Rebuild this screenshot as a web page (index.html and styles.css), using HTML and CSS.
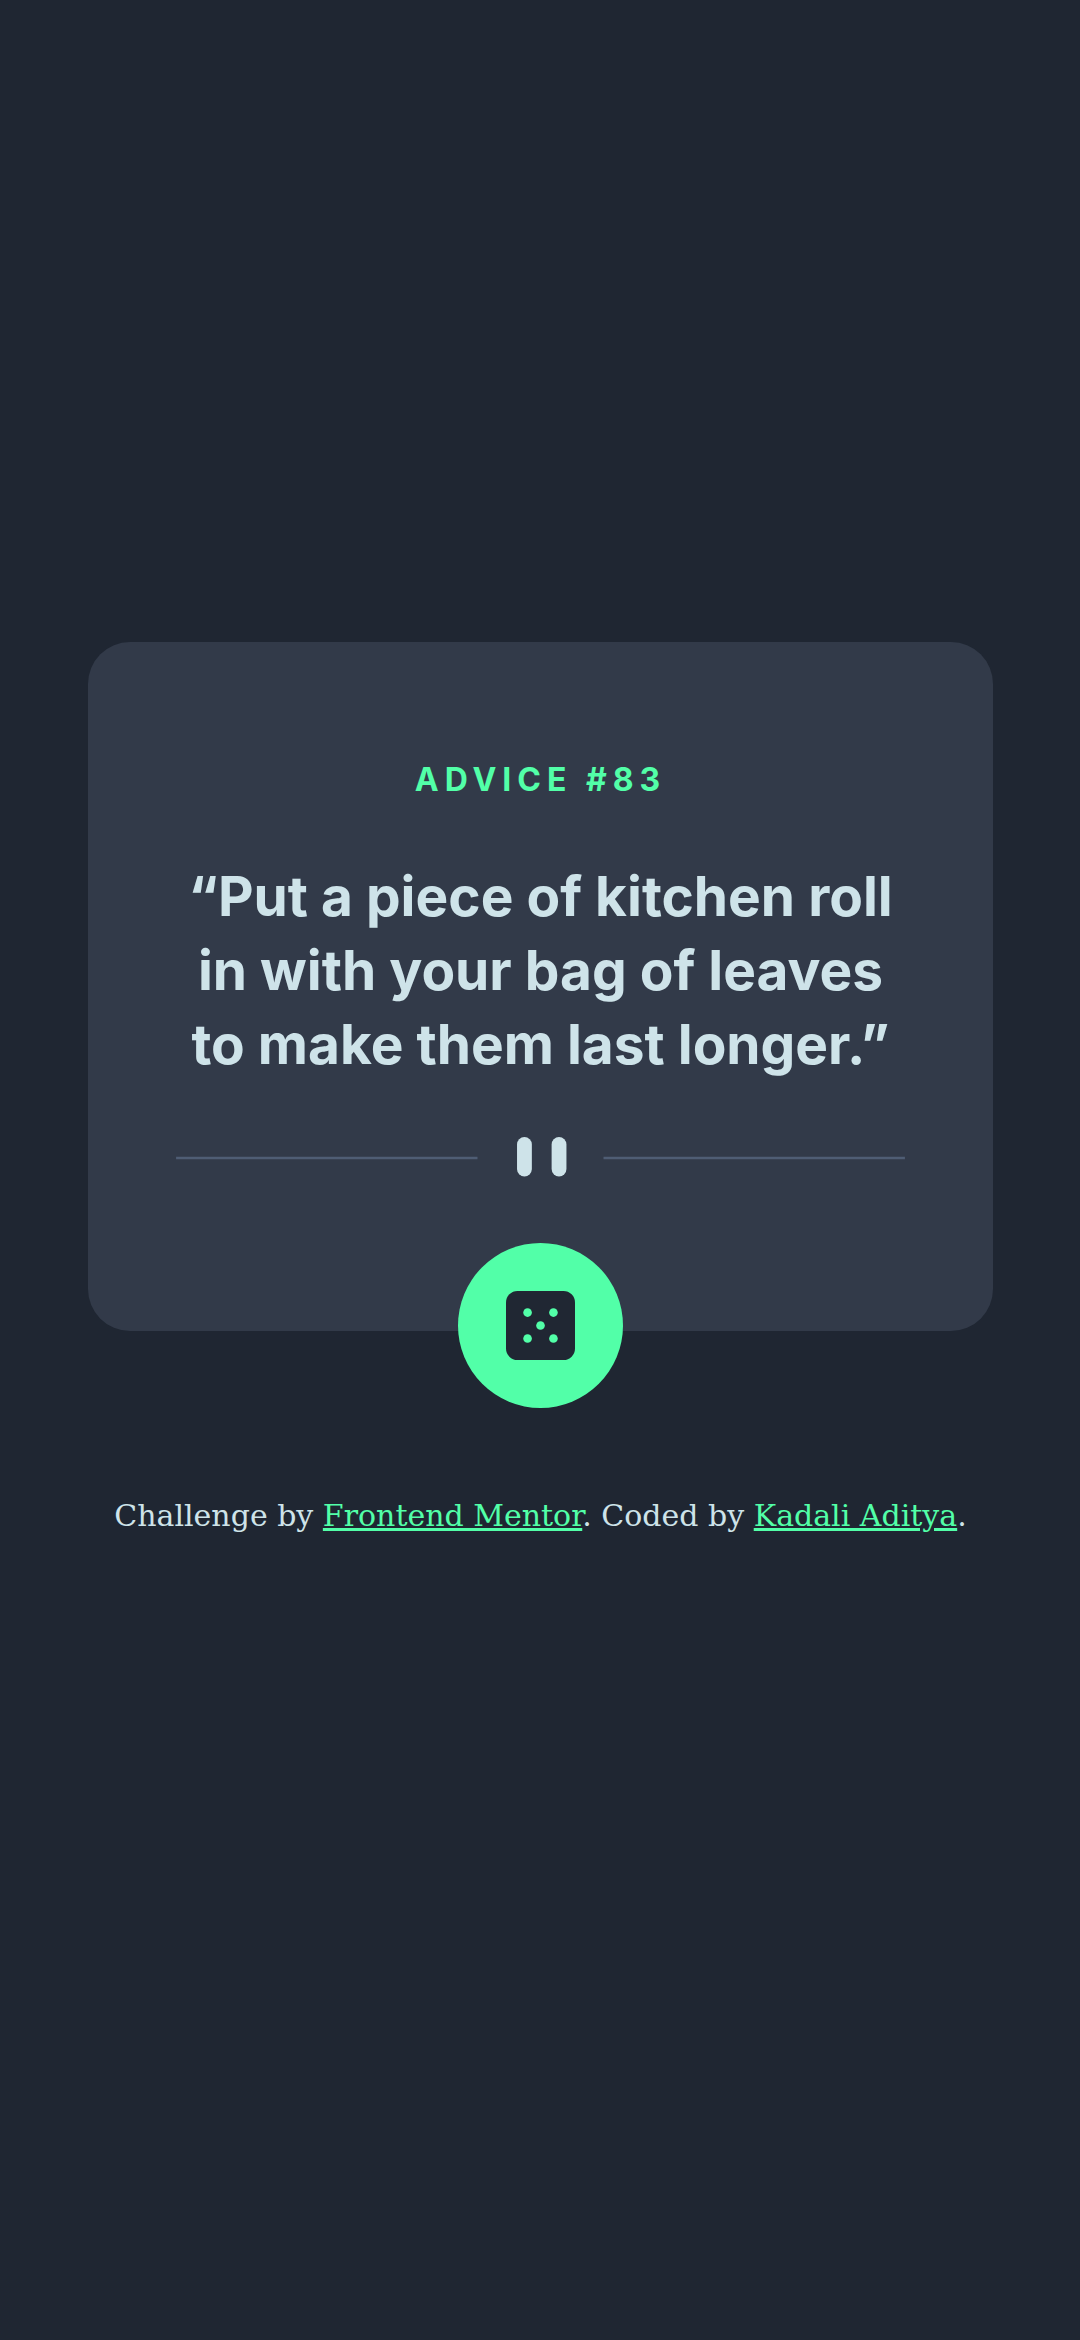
FILE: index.html
```html
<!DOCTYPE html>
<html lang="en">
<head>
  <meta charset="utf-8">
  <meta name="viewport" content="width=device-width, initial-scale=1">
  <title>Advice generator</title>
  <link rel="stylesheet" href="styles.css">
</head>
<body class="page">
  <main class="card">
    <h1 class="card-title">ADVICE #83</h1>
    <p class="quote">“Put a piece of kitchen roll in with your bag of leaves to make them last longer.”</p>
    <svg class="divider" viewBox="0 0 295 16" aria-hidden="true">
      <path fill="#4f5d74" d="M0 8h122v1H0zM173 8h122v1H173z"/>
      <g fill="#cee3e9">
        <rect x="138" width="6" height="16" rx="3"/>
        <rect x="152" width="6" height="16" rx="3"/>
      </g>
    </svg>
    <button class="dice-button" type="button" aria-label="New advice">
      <svg class="dice" viewBox="0 0 24 24" aria-hidden="true">
        <rect width="24" height="24" rx="4" fill="#202733"/>
        <g fill="#52ffa8">
          <circle cx="7.5" cy="7.5" r="1.5"/>
          <circle cx="16.5" cy="7.5" r="1.5"/>
          <circle cx="12" cy="12" r="1.5"/>
          <circle cx="7.5" cy="16.5" r="1.5"/>
          <circle cx="16.5" cy="16.5" r="1.5"/>
        </g>
      </svg>
    </button>
  </main>
  <footer class="attribution">
    Challenge by <a class="link" href="#mentor">Frontend Mentor</a>. Coded by <a class="link" href="#author">Kadali Aditya</a>.
  </footer>
</body>
</html>
```
FILE: styles.css
```css
* {
  box-sizing: border-box;
}

.page {
  margin: 0;
  min-height: 100vh;
  padding: 0 87px 164px 88px;
  display: flex;
  flex-direction: column;
  align-items: center;
  justify-content: center;
  background: #1f2632;
  color: #cee3e9;
}

.card {
  width: 100%;
  padding: 116px 88px 0;
  display: flex;
  flex-direction: column;
  align-items: center;
  border-radius: 42px;
  background: #323a49;
  font-family: Inter, "Open Sans", sans-serif;
  text-align: center;
}

.card-title {
  margin: 0 0 57px;
  color: #52ffa8;
  font-size: 32px;
  font-weight: 700;
  line-height: 44px;
  letter-spacing: 6px;
}

.quote {
  margin: 0 0 56px;
  font-size: 55px;
  font-weight: 700;
  line-height: 74px;
}

.divider {
  display: block;
  width: 100%;
  margin-bottom: 66px;
}

.dice-button {
  width: 165px;
  height: 165px;
  margin-bottom: -77px;
  padding: 0;
  display: grid;
  place-items: center;
  border: 0;
  border-radius: 50%;
  background: #52ffa8;
  cursor: pointer;
}

.dice {
  width: 69px;
  height: 69px;
}

.attribution {
  margin-top: 167px;
  font-family: "DejaVu Serif", serif;
  font-size: 30px;
  line-height: 36px;
  text-align: center;
}

.link {
  color: #52ffa8;
}
```
